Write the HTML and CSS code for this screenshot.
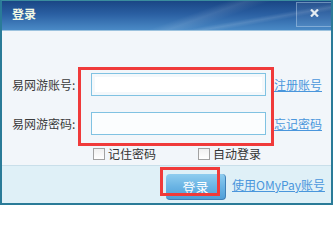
FILE: index.html
```html
<!DOCTYPE html>
<html lang="zh-CN">
<head>
<meta charset="utf-8">
<title>登录</title>
<link rel="stylesheet" href="styles.css">
</head>
<body>
<div class="window">
  <div class="titlebar">
    <span class="title">登录</span>
    <div class="close">
      <svg width="9" height="8" viewBox="0 0 9 8"><path d="M1 0.5 L8 7.5 M8 0.5 L1 7.5" stroke="#e4ecf2" stroke-width="2.2"/></svg>
    </div>
  </div>
  <div class="content">
    <div class="form">
      <label class="label">易网游账号:</label>
      <div class="input input-first"></div>
      <a class="link">注册账号</a>
      <label class="label">易网游密码:</label>
      <div class="input"></div>
      <a class="link">忘记密码</a>
    </div>
    <div class="checks">
      <div class="check check-first"><span class="box"></span><span>记住密码</span></div>
      <div class="check"><span class="box"></span><span>自动登录</span></div>
    </div>
  </div>
  <div class="footer">
    <div class="btn">登录</div>
    <a class="link pay">使用OMyPay账号</a>
  </div>
  <div class="mark mark-form"></div>
  <div class="mark mark-btn"></div>
</div>
</body>
</html>
```
FILE: styles.css
```css
html, body {
  margin: 0;
  padding: 0;
  background: #ffffff;
}
.window {
  position: relative;
  width: 333px;
  height: 205px;
  box-sizing: border-box;
  border: 2px solid #2a7b98;
  border-top: 1px solid #3a8c9e;
  display: flex;
  flex-direction: column;
  font-family: "Noto Sans CJK SC", "Noto Sans", sans-serif;
  font-size: 12px;
  overflow: hidden;
}
.titlebar {
  flex: none;
  display: flex;
  align-items: flex-start;
  justify-content: space-between;
  background:
    linear-gradient(160deg, transparent 55%, rgba(255,255,255,0.10) 60%, transparent 66%),
    linear-gradient(170deg, transparent 70%, rgba(255,255,255,0.12) 74%, transparent 78%),
    linear-gradient(to bottom, #1a4685 0%, #2a5fa2 45%, #4a8ac6 100%);
  border-bottom: 1px solid #9cc2de;
  box-sizing: border-box;
  height: 30px;
}
.title {
  color: #f2f8e4;
  font-weight: bold;
  font-size: 12px;
  line-height: 14px;
  margin: 6px 0 0 10px;
}
.close {
  width: 35px;
  height: 25px;
  margin-top: 1px;
  box-sizing: border-box;
  border: 1px solid rgba(190, 215, 240, 0.45);
  border-right: none;
  background: rgba(255,255,255,0.06);
  display: flex;
  justify-content: center;
  padding-top: 6px;
}
.content {
  height: 134px;
  flex: none;
  background: #f2f6fa;
  padding: 42px 0 0 10px;
  box-sizing: border-box;
}
.form {
  display: grid;
  grid-template-columns: 79px 175px auto;
  grid-auto-rows: 23px;
  row-gap: 16px;
  align-items: center;
}
.label {
  color: #3a3a3a;
  line-height: 14px;
}
.input {
  height: 23px;
  box-sizing: border-box;
  border: 1px solid #80c2e2;
  background: #fbfdfe;
}
.input-first {
  background: #ffffff;
  box-shadow: inset 0 0 0 3px #f4f8fb;
}
.link {
  color: #4a96dc;
  text-decoration: underline;
  line-height: 14px;
  cursor: pointer;
}
.form .link { margin-left: 8px; }
.checks {
  display: flex;
  margin: 13px 0 0 81px;
  height: 12px;
}
.check {
  display: flex;
  align-items: center;
  gap: 3px;
  color: #333333;
  line-height: 12px;
}
.check-first { width: 105px; }
.box {
  width: 12px;
  height: 12px;
  box-sizing: border-box;
  border: 1px solid #a2a2a2;
  background: linear-gradient(to bottom, #f0f0f0, #ffffff);
  flex: none;
}
.footer {
  flex: 1;
  background: #dff0f7;
  border-top: 1px solid #c9dfea;
  display: flex;
  align-items: flex-start;
  padding: 8px 0 0 164px;
}
.btn {
  width: 60px;
  height: 26px;
  box-sizing: border-box;
  border-radius: 4px;
  background: linear-gradient(to bottom, #8fcdef 0%, #6ab4e4 50%, #4e9fd8 100%);
  border-right: 1px solid #3f7fb6;
  border-bottom: 1px solid #3f7fb6;
  color: #ffffff;
  font-size: 13px;
  display: flex;
  align-items: center;
  justify-content: center;
}
.pay {
  margin: 4px 0 0 6px;
}
.mark {
  position: absolute;
  border: 3px solid #f03a3a;
  box-sizing: border-box;
}
.mark-form {
  left: 76px;
  top: 66px;
  width: 196px;
  height: 79px;
}
.mark-btn {
  left: 158px;
  top: 166px;
  width: 60px;
  height: 29px;
}
```
